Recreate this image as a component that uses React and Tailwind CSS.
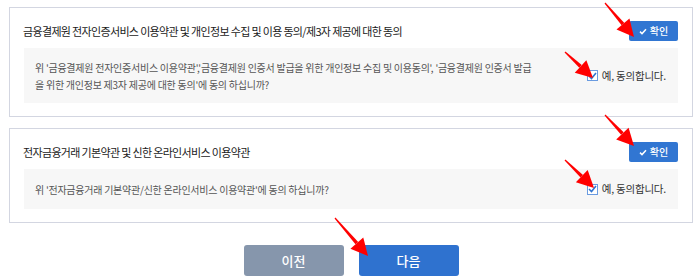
import React from "react";

const FONT = { fontFamily: '"Noto Sans CJK KR", "Noto Sans", sans-serif' };

function Arrow({ x1, y1, x2, y2 }) {
  const dx = x2 - x1;
  const dy = y2 - y1;
  const len = Math.hypot(dx, dy);
  const ux = dx / len;
  const uy = dy / len;
  const px = -uy;
  const py = ux;
  const headLen = 17;
  const headW = 8.5;
  const bx = x2 - ux * headLen;
  const by = y2 - uy * headLen;
  const tw = 0.6;
  const bw = 1.8;
  const shaft = [
    [x1 + px * tw, y1 + py * tw],
    [bx + px * bw, by + py * bw],
    [bx - px * bw, by - py * bw],
    [x1 - px * tw, y1 - py * tw],
  ];
  const head = [
    [x2, y2],
    [bx + px * headW, by + py * headW],
    [bx - px * headW, by - py * headW],
  ];
  const s = (pts) => pts.map((p) => p.join(",")).join(" ");
  return (
    <g fill="#ff0000">
      <polygon points={s(shaft)} />
      <polygon points={s(head)} />
    </g>
  );
}

function ConfirmButton() {
  return (
    <button className="flex h-[20px] w-[49px] items-center justify-center gap-[3px] rounded-[2px] bg-[#3176d2] text-[10px] font-medium text-white">
      <svg width="8" height="7" viewBox="0 0 8 7" fill="none">
        <path d="M1 3.6 L3 5.6 L7 1.2" stroke="white" strokeWidth="1.5" />
      </svg>
      <span className="leading-none">확인</span>
    </button>
  );
}

function Agree() {
  return (
    <div className="flex items-center gap-[4px] shrink-0">
      <span className="flex h-[11px] w-[11px] items-center justify-center border border-[#6a9be0] bg-white">
        <svg width="9" height="8" viewBox="0 0 9 8" fill="none">
          <path d="M1 4 L3.5 6.5 L8 1" stroke="#2f74d0" strokeWidth="1.6" />
        </svg>
      </span>
      <span className="text-[10.5px] font-normal text-[#333] tracking-[-0.02em]">예, 동의합니다.</span>
    </div>
  );
}

function Panel({ title, children, boxClass }) {
  return (
    <div className="border border-[#d3d6e1] bg-white px-[14px] pt-[13px] pb-[13px]">
      <div className="flex h-[20px] items-center justify-between">
        <div className="-ml-[1px] text-[11px] font-normal text-[#1a1a1a] tracking-[-0.06em]">{title}</div>
        <ConfirmButton />
      </div>
      <div className={"mt-[7px] flex items-center justify-between bg-[#f7f7f7] pl-[11px] pr-[12px] " + boxClass}>
        <div className="text-[10px] leading-[17px] text-[#555] tracking-[-0.025em]">{children}</div>
        <Agree />
      </div>
    </div>
  );
}

export default function App() {
  return (
    <div className="relative h-[280px] w-[700px] bg-white" style={FONT}>
      <div className="flex flex-col gap-[11px] pt-[7px] pl-[9px] pr-[7px]">
        <Panel
          title="금융결제원 전자인증서비스 이용약관 및 개인정보 수집 및 이용 동의/제3자 제공에 대한 동의"
          boxClass="h-[55px]"
        >
          위 '금융결제원 전자인증서비스 이용약관','금융결제원 인증서 발급을 위한 개인정보 수집 및 이용동의', '금융결제원 인증서 발급
          <br />
          을 위한 개인정보 제3자 제공에 대한 동의'에 동의 하십니까?
        </Panel>
        <Panel title="전자금융거래 기본약관 및 신한 온라인서비스 이용약관" boxClass="h-[40px]">
          위 '전자금융거래 기본약관/신한 온라인서비스 이용약관'에 동의 하십니까?
        </Panel>
      </div>
      <div className="mt-[22px] flex justify-center gap-[15px] pl-[2px]">
        <button className="h-[31px] w-[100px] rounded-[3px] bg-[#8696ac] text-[13px] font-medium text-white">이전</button>
        <button className="h-[31px] w-[100px] rounded-[3px] bg-[#2f72cf] text-[13px] font-medium text-white">다음</button>
      </div>
      <svg className="pointer-events-none absolute left-0 top-0" width="700" height="280">
        <Arrow x1={605} y1={3} x2={634} y2={37} />
        <Arrow x1={565} y1={52} x2={593} y2={78} />
        <Arrow x1={605} y1={115} x2={634} y2={146} />
        <Arrow x1={565} y1={160} x2={594} y2={188} />
        <Arrow x1={335} y1={218} x2={368} y2={256} />
      </svg>
    </div>
  );
}
